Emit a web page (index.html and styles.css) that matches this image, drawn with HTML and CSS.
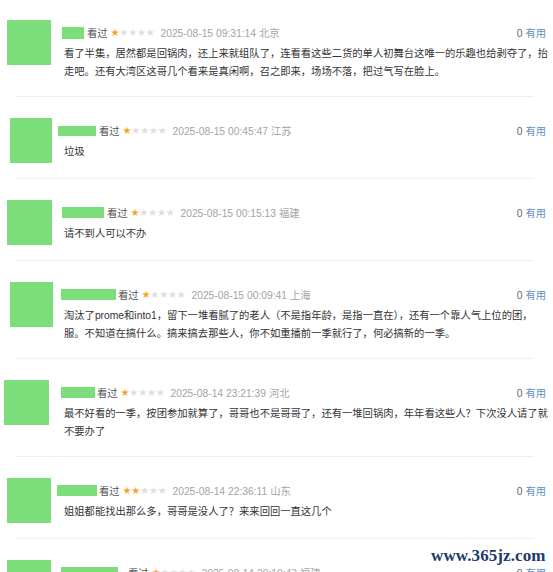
FILE: index.html
```html
<!DOCTYPE html>
<html lang="zh-CN">
<head>
  <meta charset="UTF-8">
  <meta name="viewport" content="width=device-width, initial-scale=1.0">
  <title>短评</title>
  <link rel="stylesheet" href="styles.css">
</head>
<body>

  <div class="comment-list">

    <div class="comment first">
      <div class="avatar-col"><div class="avatar"></div></div>
      <div class="comment-body">
        <div class="meta">
          <span class="name n1"></span>
          <span class="watched">看过</span>
          <span class="stars"><i class="on">★</i><i>★</i><i>★</i><i>★</i><i>★</i></span>
          <span class="time">2025-08-15 09:31:14 北京</span>
          <span class="votes">0 <a href="#">有用</a></span>
        </div>
        <p class="text">看了半集，居然都是回锅肉，还上来就组队了，连看看这些二货的单人初舞台这唯一的乐趣也给剥夺了，抬<br>走吧。还有大湾区这哥几个看来是真闲啊，召之即来，场场不落，把过气写在脸上。</p>
      </div>
    </div>
    <div class="sep"></div>

    <div class="comment">
      <div class="avatar-col"><div class="avatar a2"></div></div>
      <div class="comment-body">
        <div class="meta">
          <span class="name n2"></span>
          <span class="watched">看过</span>
          <span class="stars"><i class="on">★</i><i>★</i><i>★</i><i>★</i><i>★</i></span>
          <span class="time">2025-08-15 00:45:47 江苏</span>
          <span class="votes">0 <a href="#">有用</a></span>
        </div>
        <p class="text">垃圾</p>
      </div>
    </div>
    <div class="sep"></div>

    <div class="comment">
      <div class="avatar-col"><div class="avatar a3"></div></div>
      <div class="comment-body">
        <div class="meta">
          <span class="name n3"></span>
          <span class="watched">看过</span>
          <span class="stars"><i class="on">★</i><i>★</i><i>★</i><i>★</i><i>★</i></span>
          <span class="time">2025-08-15 00:15:13 福建</span>
          <span class="votes">0 <a href="#">有用</a></span>
        </div>
        <p class="text">请不到人可以不办</p>
      </div>
    </div>
    <div class="sep"></div>

    <div class="comment">
      <div class="avatar-col"><div class="avatar a4"></div></div>
      <div class="comment-body">
        <div class="meta">
          <span class="name n4"></span>
          <span class="watched">看过</span>
          <span class="stars"><i class="on">★</i><i>★</i><i>★</i><i>★</i><i>★</i></span>
          <span class="time">2025-08-15 00:09:41 上海</span>
          <span class="votes">0 <a href="#">有用</a></span>
        </div>
        <p class="text">淘汰了prome和into1，留下一堆看腻了的老人（不是指年龄，是指一直在），还有一个靠人气上位的团，<br>服。不知道在搞什么。搞来搞去那些人，你不如重播前一季就行了，何必搞新的一季。</p>
      </div>
    </div>
    <div class="sep"></div>

    <div class="comment">
      <div class="avatar-col"><div class="avatar a5"></div></div>
      <div class="comment-body">
        <div class="meta">
          <span class="name n5"></span>
          <span class="watched">看过</span>
          <span class="stars"><i class="on">★</i><i>★</i><i>★</i><i>★</i><i>★</i></span>
          <span class="time">2025-08-14 23:21:39 河北</span>
          <span class="votes">0 <a href="#">有用</a></span>
        </div>
        <p class="text">最不好看的一季，按团参加就算了，哥哥也不是哥哥了，还有一堆回锅肉，年年看这些人？下次没人请了就<br>不要办了</p>
      </div>
    </div>
    <div class="sep"></div>

    <div class="comment">
      <div class="avatar-col"><div class="avatar"></div></div>
      <div class="comment-body">
        <div class="meta">
          <span class="name n6"></span>
          <span class="watched">看过</span>
          <span class="stars"><i class="on">★</i><i class="on">★</i><i>★</i><i>★</i><i>★</i></span>
          <span class="time">2025-08-14 22:36:11 山东</span>
          <span class="votes">0 <a href="#">有用</a></span>
        </div>
        <p class="text">姐姐都能找出那么多，哥哥是没人了？来来回回一直这几个</p>
      </div>
    </div>
    <div class="sep"></div>

    <div class="comment">
      <div class="avatar-col"><div class="avatar"></div></div>
      <div class="comment-body">
        <div class="meta">
          <span class="name n7"></span>
          <span class="watched">看过</span>
          <span class="stars"><i class="on">★</i><i>★</i><i>★</i><i>★</i><i>★</i></span>
          <span class="time">2025-08-14 20:10:43 福建</span>
          <span class="votes">0 <a href="#">有用</a></span>
        </div>
        <p class="text">一季不如一季</p>
      </div>
    </div>

  </div>

  <div class="watermark">www.365jz.com</div>

</body>
</html>
```

FILE: styles.css
```css
html, body {
  overflow: hidden;
}

body {
  margin: 0;
  background: #fff;
  font-family: "Liberation Sans", "Noto Sans CJK SC", sans-serif;
  font-size: 10.3px;
  color: #333;
  position: relative;
  height: 572px;
}

.comment-list {
  padding-right: 7px;
}

.comment {
  display: grid;
  grid-template-columns: 64px 1fr;
  padding: 21px 0 15px;
}

.comment.first {
  padding-top: 20px;
}

.avatar {
  width: 44px;
  height: 45px;
  margin-left: 7px;
  background: #7cdd7b;
}

.avatar.a2 { margin-left: 10px; width: 42px; }
.avatar.a3 { width: 45px; }
.avatar.a4 { margin-left: 10px; width: 43px; }
.avatar.a5 { margin-left: 4px; width: 45px; }

.comment-body {
  min-width: 0;
}

.meta {
  display: flex;
  align-items: center;
  height: 13px;
  margin-top: 6px;
  white-space: nowrap;
}

.name {
  display: inline-block;
  height: 11px;
  background: #7cdd7b;
  margin-right: 3px;
}

.n1 { width: 22px; margin-left: -2px; height: 12px; }
.n2 { width: 38px; margin-left: -6px; height: 10px; }
.n3 { width: 42px; margin-left: -2px; }
.n4 { width: 55px; margin-left: -3px; margin-right: 2px; }
.n5 { width: 34px; margin-left: -3px; margin-right: 2px; }
.n6 { width: 40px; margin-left: -7px; margin-right: 2px; }
.n7 { width: 57px; margin-left: -3px; margin-right: 10px; }

.watched {
  color: #555;
  font-family: "Noto Sans CJK SC", sans-serif;
}

.stars {
  margin-left: 3px;
  font-family: "DejaVu Sans", sans-serif;
  font-size: 10px;
  letter-spacing: -0.2px;
}

.stars i {
  font-style: normal;
  color: #dedede;
}

.stars i.on {
  color: #f4a623;
}

.time {
  margin-left: 6px;
  color: #a3a3a3;
}

.votes {
  margin-left: auto;
  color: #666;
}

.votes a {
  color: #5f8fc4;
  text-decoration: none;
}

.text {
  margin: 6px 0 0;
  line-height: 18px;
  white-space: nowrap;
  color: #333;
}

.sep {
  height: 1px;
  margin: 0 12px 0 15px;
  background: #efefef;
}

.watermark {
  position: absolute;
  left: 431px;
  top: 546px;
  font-family: "Liberation Serif", serif;
  font-weight: bold;
  font-size: 17px;
  color: #1d3a6f;
  letter-spacing: 0.1px;
}
```
